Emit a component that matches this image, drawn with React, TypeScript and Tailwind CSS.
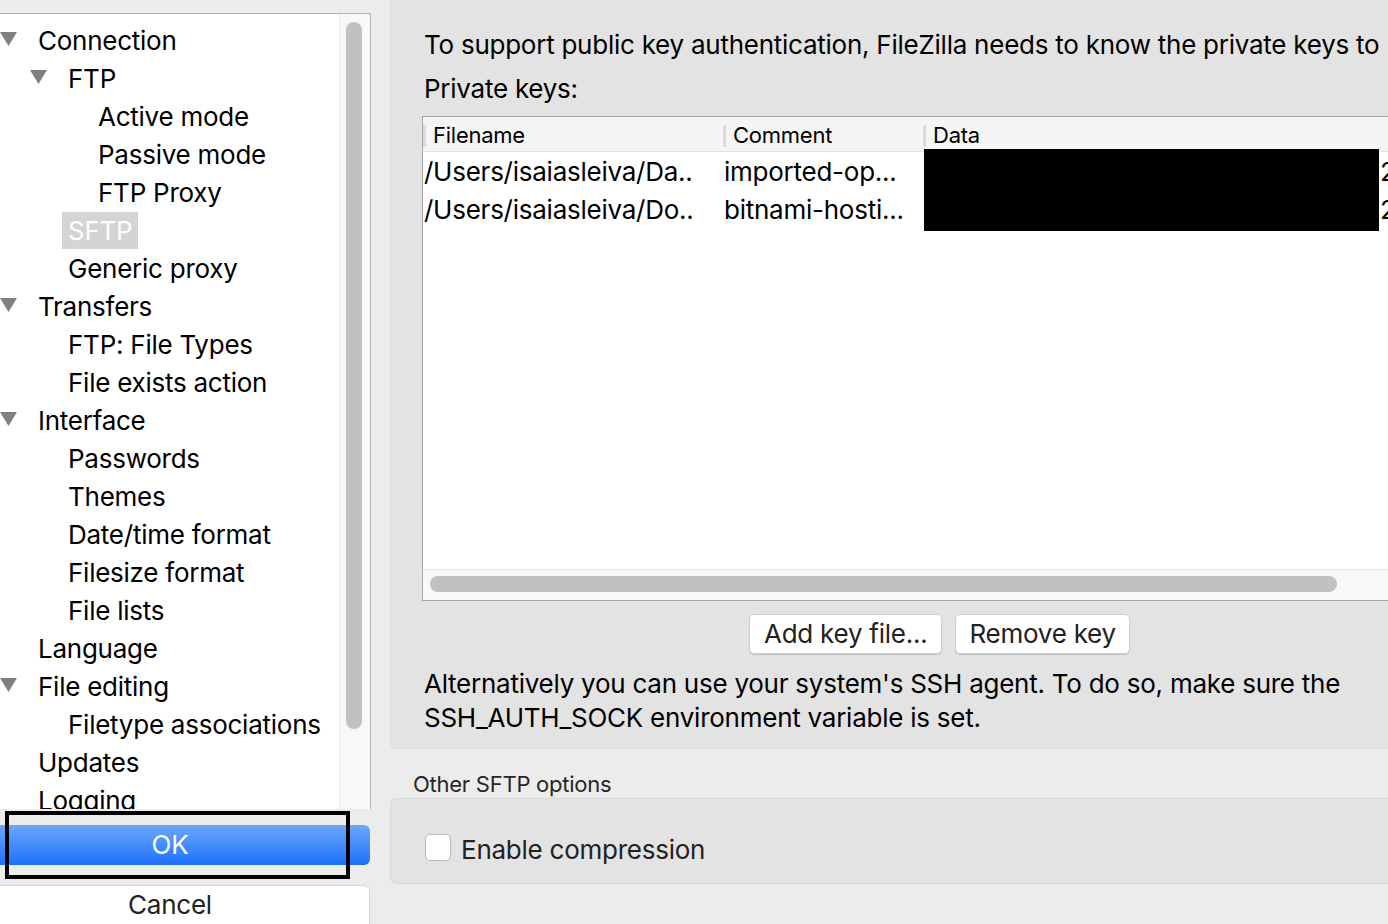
import React from "react";

type Node = { label: string; level: number; open?: boolean; selected?: boolean };

const TREE: Node[] = [
  { label: "Connection", level: 0, open: true },
  { label: "FTP", level: 1, open: true },
  { label: "Active mode", level: 2 },
  { label: "Passive mode", level: 2 },
  { label: "FTP Proxy", level: 2 },
  { label: "SFTP", level: 1, selected: true },
  { label: "Generic proxy", level: 1 },
  { label: "Transfers", level: 0, open: true },
  { label: "FTP: File Types", level: 1 },
  { label: "File exists action", level: 1 },
  { label: "Interface", level: 0, open: true },
  { label: "Passwords", level: 1 },
  { label: "Themes", level: 1 },
  { label: "Date/time format", level: 1 },
  { label: "Filesize format", level: 1 },
  { label: "File lists", level: 1 },
  { label: "Language", level: 0 },
  { label: "File editing", level: 0, open: true },
  { label: "Filetype associations", level: 1 },
  { label: "Updates", level: 0 },
  { label: "Logging", level: 0 },
];

const PAD = ["pl-0", "pl-[30px]", "pl-[60px]"];

const Triangle = () => (
  <svg width="17" height="14" viewBox="0 0 17 14" className="-mt-[2px]">
    <path d="M0 0 L17 0 L8.5 14 Z" fill="#808080" />
  </svg>
);

const KEYS = [
  { file: "/Users/isaiasleiva/Da..", comment: "imported-op..." },
  { file: "/Users/isaiasleiva/Do..", comment: "bitnami-hosti..." },
];

export default function App() {
  return (
    <div
      className="flex w-[1388px] h-[924px] overflow-hidden bg-[#ececec] text-black tracking-[-0.25px]"
      style={{ fontFamily: "Inter, 'Noto Sans', sans-serif" }}
    >
      {/* left: page tree + buttons */}
      <div className="relative flex flex-col w-[371px] shrink-0 overflow-hidden">
        <div className="h-[13px] shrink-0" />
        <div className="flex shrink-0 h-[796px] bg-white border-t border-r border-[#b4b4b4] overflow-hidden">
          <div className="flex-1 pt-[7px]">
            {TREE.map((n) => (
              <div key={n.label} className={`flex items-center h-[38px] text-[26px] ${PAD[n.level]}`}>
                <div className="w-[38px] shrink-0 flex items-center">
                  {n.open && <Triangle />}
                </div>
                {n.selected ? (
                  <span className="-ml-[6px] px-[6px] h-[37px] flex items-center bg-[#d4d4d4] text-white">
                    {n.label}
                  </span>
                ) : (
                  <span>{n.label}</span>
                )}
              </div>
            ))}
          </div>
          <div className="w-[31px] shrink-0 bg-[#f8f8f8] border-l border-[#ebebeb] pt-[8px] pl-[6px]">
            <div className="w-[16px] h-[707px] rounded-full bg-[#c1c1c1]" />
          </div>
        </div>
        <div className="h-[16px] shrink-0" />
        <button className="shrink-0 h-[40px] w-[400px] -ml-[30px] rounded-r-[6px] bg-gradient-to-b from-[#6ba8fb] to-[#1b6ffa] text-white text-[26px] leading-none">
          OK
        </button>
        <div className="h-[20px] shrink-0" />
        <button className="shrink-0 h-[44px] w-[400px] -ml-[30px] rounded-tr-[6px] bg-white border border-[#d4d4d4] text-[26px] text-[#222] leading-none pb-[4px]">
          Cancel
        </button>
        <div className="absolute left-[5px] top-[811px] w-[345px] h-[68px] border-[4px] border-black" />
      </div>

      {/* right: SFTP page */}
      <div className="ml-[19px] flex-1 flex flex-col">
        <div className="shrink-0 h-[749px] bg-[#e3e3e3] border-l border-b border-[#dcdcdc] rounded-bl-[7px] pl-[33px] pt-[26px]">
          <div className="text-[26px] leading-[38px] whitespace-nowrap">
            To support public key authentication, FileZilla needs to know the private keys to use.
          </div>
          <div className="text-[26px] leading-[38px] mt-[6px]">Private keys:</div>
          <div className="relative ml-[-2px] mt-[8px] h-[485px] bg-white border-t border-l border-b border-[#a6a6a6] flex flex-col">
            <div className="flex h-[35px] bg-[#f5f5f5] border-b border-[#e2e2e2] text-[22px] items-center pt-[3px]">
              <div className="w-[300px] flex items-center">
                <span className="w-[3px] h-[22px] bg-[#dcdcdc]" />
                <span className="ml-[7px]">Filename</span>
              </div>
              <div className="w-[200px] flex items-center">
                <span className="w-[3px] h-[22px] bg-[#dcdcdc]" />
                <span className="ml-[7px]">Comment</span>
              </div>
              <div className="flex items-center">
                <span className="w-[3px] h-[22px] bg-[#dcdcdc]" />
                <span className="ml-[7px]">Data</span>
              </div>
            </div>
            {KEYS.map((k) => (
              <div key={k.file} className="flex h-[38px] items-center text-[26px]">
                <div className="w-[301px] pl-[1px] whitespace-nowrap overflow-hidden">{k.file}</div>
                <div className="w-[200px] whitespace-nowrap overflow-hidden">{k.comment}</div>
                <div className="flex-1 whitespace-nowrap pl-[456px]">2</div>
              </div>
            ))}
            <div className="flex-1" />
            <div className="h-[31px] bg-[#f9f9f9] border-t border-[#e6e6e6] pl-[7px] pt-[6px]">
              <div className="w-[907px] h-[16px] rounded-full bg-[#c1c1c1]" />
            </div>
            <div className="absolute left-[501px] top-[32px] w-[455px] h-[82px] bg-black" />
          </div>
          <div className="flex gap-[13px] ml-[325px] mt-[13px]">
            <button className="h-[40px] px-[14px] bg-white rounded-[5px] border border-[#d0d0d0] shadow-[0_1px_1px_rgba(0,0,0,0.15)] text-[26px] leading-none text-[#222]">
              Add key file...
            </button>
            <button className="h-[40px] px-[13px] bg-white rounded-[5px] border border-[#d0d0d0] shadow-[0_1px_1px_rgba(0,0,0,0.15)] text-[26px] leading-none text-[#222]">
              Remove key
            </button>
          </div>
          <div className="mt-[13px] text-[26px] leading-[34px] w-[940px]">
            Alternatively you can use your system's SSH agent. To do so, make sure the SSH_AUTH_SOCK environment variable is set.
          </div>
        </div>
        <div className="shrink-0 pl-[23px] pt-[22px] h-[49px] text-[22px] leading-[26px] text-[#262626]">Other SFTP options</div>
        <div className="shrink-0 h-[86px] bg-[#e3e3e3] border-l border-t border-b border-[#d8d8d8] rounded-l-[7px] flex items-center pl-[34px] pt-[12px]">
          <span className="w-[26px] h-[27px] bg-white border border-[#b8b8b8] rounded-[5px] mr-[10px]" />
          <span className="text-[26px] text-[#222] mt-[4px]">Enable compression</span>
        </div>
      </div>
    </div>
  );
}
